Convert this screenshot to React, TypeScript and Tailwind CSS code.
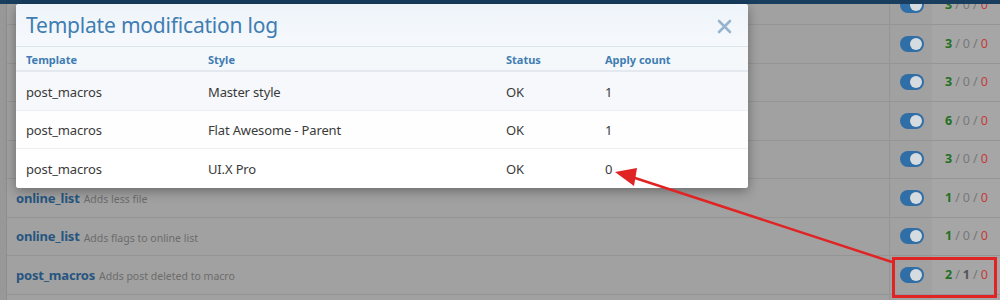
import React from "react";

type BgRow = { name?: string; desc?: string; stats: [string, string, string]; mid?: boolean };

const bgRows: BgRow[] = [
  { stats: ["3", "0", "0"] },
  { stats: ["3", "0", "0"] },
  { stats: ["3", "0", "0"] },
  { stats: ["6", "0", "0"] },
  { stats: ["3", "0", "0"] },
  { name: "online_list", desc: "Adds less file", stats: ["1", "0", "0"] },
  { name: "online_list", desc: "Adds flags to online list", stats: ["1", "0", "0"] },
  { name: "post_macros", desc: "Adds post deleted to macro", stats: ["2", "1", "0"], mid: true },
  { stats: ["1", "0", "0"] },
];

const logRows = [
  { t: "post_macros", s: "Master style", st: "OK", c: "1", bg: "bg-[#f6f8fb]" },
  { t: "post_macros", s: "Flat Awesome - Parent", st: "OK", c: "1", bg: "bg-[#fefefe]" },
  { t: "post_macros", s: "UI.X Pro", st: "OK", c: "0", bg: "bg-white" },
];

function Toggle() {
  return (
    <div className="w-[24px] h-[16px] rounded-full bg-[#2f6ea6] flex items-center justify-end pr-[2px]">
      <div className="w-[12px] h-[12px] rounded-full bg-[#d6dbe0]" />
    </div>
  );
}

export default function App() {
  return (
    <div
      className="relative w-[1000px] h-[300px] overflow-hidden bg-[#a1a1a1]"
      style={{ fontFamily: '"Noto Sans", "Open Sans", sans-serif' }}
    >
      <div className="h-[4px] bg-[#183d5f]" />
      <div className="flex h-[296px] overflow-hidden">
        <div className="w-[7px] bg-[#989898] border-r border-[#8e8e8e]" />
        <div className="flex-1 -mt-[17.5px]">
          {bgRows.map((r, i) => (
            <div key={i} className="flex h-[38.5px] border-b border-[#959595]">
              <div className="flex-1 flex items-center pl-[9px] gap-[4px] min-w-0">
                {r.name && (
                  <>
                    <span className="text-[13px] tracking-[-0.2px] font-bold text-[#275580] leading-none mt-[1px]">{r.name}</span>
                    <span className="text-[10.5px] text-[#6c6c6c] leading-none mt-[3px]">{r.desc}</span>
                  </>
                )}
              </div>
              <div className="w-[43px] border-l border-[#959595] flex items-center pl-[10px]">
                <Toggle />
              </div>
              <div className="w-[68px] bg-[#a6a6a6] flex items-center pl-[13px] text-[12.5px] leading-none">
                <span className="font-bold text-[#237023]">{r.stats[0]}</span>
                <span className="text-[#767676] mx-[3px]">/</span>
                <span className={r.mid ? "font-bold text-[#555555]" : "text-[#787878]"}>{r.stats[1]}</span>
                <span className="text-[#767676] mx-[3px]">/</span>
                <span className="text-[#c43a3a]">{r.stats[2]}</span>
              </div>
            </div>
          ))}
        </div>
      </div>

      {/* Modal */}
      <div className="absolute left-[16px] top-[4px] w-[732px] h-[184px] rounded-[3px] bg-white overflow-hidden shadow-[0_3px_12px_rgba(0,0,0,0.35)]">
        <div className="h-[43px] flex items-center justify-between pl-[10px] pr-[16px] bg-gradient-to-b from-[#eef4fa] to-[#f6f9fc] border-b border-[#dce4ec]">
          <span className="text-[21px] tracking-[-0.2px] text-[#3f7db2] leading-none mt-[1px]">Template modification log</span>
          <svg width="15" height="15" viewBox="0 0 15 15" className="mt-[3px]">
            <path d="M2 2 L13 13 M13 2 L2 13" stroke="#97b4cf" strokeWidth="2.6" strokeLinecap="round" />
          </svg>
        </div>
        <div className="grid grid-cols-[182px_298px_99px_1fr] h-[25px] items-center pt-[3px] bg-[#f5f8fb] border-b-2 border-[#e3e9ef] text-[11px] font-bold text-[#3f7db2]">
          <div className="px-[10px]">Template</div>
          <div className="px-[10px]">Style</div>
          <div className="px-[10px]">Status</div>
          <div className="px-[10px]">Apply count</div>
        </div>
        {logRows.map((r, i) => (
          <div
            key={i}
            className={`grid grid-cols-[182px_298px_99px_1fr] h-[38.5px] items-center pt-[3px] text-[13px] tracking-[-0.15px] text-[#3a3a3a] ${r.bg} ${i < 2 ? "border-b border-[#edf0f3]" : ""}`}
          >
            <div className="px-[10px]">{r.t}</div>
            <div className="px-[10px]">{r.s}</div>
            <div className="px-[10px]">{r.st}</div>
            <div className="px-[10px]">{r.c}</div>
          </div>
        ))}
      </div>

      {/* Annotation */}
      <div className="absolute left-[892px] top-[257px] w-[105px] h-[41px] border-[3px] border-[#e02424]" />
      <svg className="absolute left-0 top-0" width="1000" height="300" viewBox="0 0 1000 300">
        <line x1="892" y1="262" x2="632" y2="177" stroke="#e02424" strokeWidth="2.5" />
        <polygon points="615,172 637,168 634,186" fill="#e02424" />
      </svg>
    </div>
  );
}
